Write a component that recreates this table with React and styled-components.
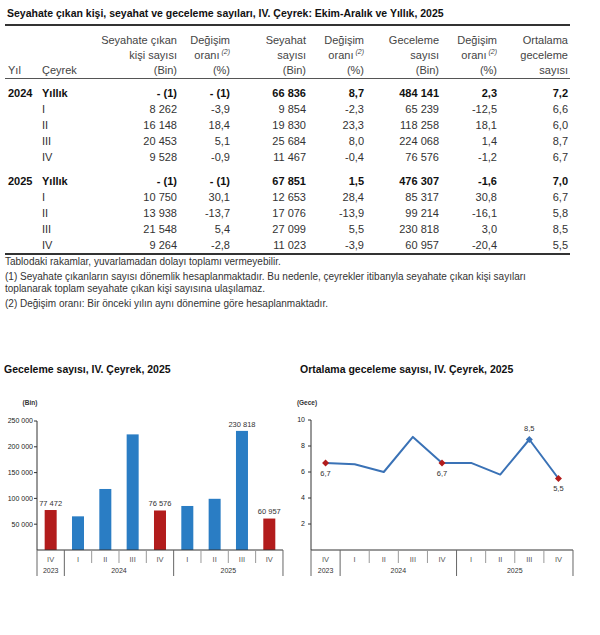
import React from 'react';
import styled, { createGlobalStyle } from 'styled-components';

const GlobalStyle = createGlobalStyle`
  body {
    margin: 0;
    background: #fff;
    font-family: "Liberation Sans", Arial, sans-serif;
  }
`;

const Page = styled.div`
  width: 600px;
  height: 635px;
  padding: 6px 0 0 5px;
  box-sizing: border-box;
  color: #222;
  overflow: hidden;
`;

const Title = styled.div`
  font-size: 10.5px;
  font-weight: bold;
  line-height: 14px;
  padding-left: 2px;
  color: #111;
`;

const Table = styled.table`
  width: 565px;
  margin-top: 4px;
  border-collapse: collapse;
  table-layout: fixed;
  border-top: 2px solid #333;
  border-bottom: 2px solid #333;
  font-size: 11px;
`;

const HeadCell = styled.th`
  font-weight: normal;
  color: #444;
  line-height: 15px;
  vertical-align: bottom;
  text-align: ${p => (p.left ? 'left' : 'right')};
  padding: 7px ${p => (p.left ? '0' : '2px')} 0 ${p => p.pl || 0}px;
  border-bottom: 1px solid #555;
`;

const Sup = styled.sup`
  font-size: 7px;
  font-style: italic;
  line-height: 0;
  vertical-align: baseline;
  position: relative;
  top: -5px;
  margin-left: 2px;
`;

const Cell = styled.td`
  height: 16px;
  line-height: 16px;
  padding: ${p => p.gap || 0}px ${p => (p.left ? '0' : '2px')} 0 ${p => p.pl || 0}px;
  text-align: ${p => (p.left ? 'left' : 'right')};
  font-weight: ${p => (p.bold ? 'bold' : 'normal')};
  color: ${p => (p.bold ? '#111' : '#333')};
  white-space: nowrap;
`;

const Notes = styled.div`
  margin-top: 1px;
  font-size: 10px;
  line-height: 12.5px;
  color: #333;
`;

const Note = styled.p`
  margin: ${p => (p.first ? '0' : '2px')} 0 0;
`;

const Charts = styled.div`
  display: flex;
  margin: 52px 0 0 -5px;
`;

const ChartBlock = styled.div`
  width: ${p => p.w}px;
  display: flex;
  flex-direction: column;
`;

const ChartTitle = styled.div`
  font-size: 10.5px;
  font-weight: bold;
  line-height: 14px;
  color: #111;
  padding-left: ${p => p.pl}px;
`;

const ChartSvg = styled.svg`
  display: block;
  margin-top: 15px;
  font-family: "Liberation Sans", Arial, sans-serif;
`;

const widths = [32, 63, 79, 53, 76, 58, 75, 58, 71];

const heads = [
  [['Yıl'], true, 3],
  [['Çeyrek'], true, 5],
  [['Seyahate çıkan', 'kişi sayısı', '(Bin)']],
  [['Değişim', 'oranı*', '(%)']],
  [['Seyahat', 'sayısı', '(Bin)']],
  [['Değişim', 'oranı*', '(%)']],
  [['Geceleme', 'sayısı', '(Bin)']],
  [['Değişim', 'oranı*', '(%)']],
  [['Ortalama', 'geceleme', 'sayısı']],
];

const groups = [
  {
    year: '2024',
    gap: 6,
    rows: [
      ['Yıllık', '- (1)', '- (1)', '66 836', '8,7', '484 141', '2,3', '7,2'],
      ['I', '8 262', '-3,9', '9 854', '-2,3', '65 239', '-12,5', '6,6'],
      ['II', '16 148', '18,4', '19 830', '23,3', '118 258', '18,1', '6,0'],
      ['III', '20 453', '5,1', '25 684', '8,0', '224 068', '1,4', '8,7'],
      ['IV', '9 528', '-0,9', '11 467', '-0,4', '76 576', '-1,2', '6,7'],
    ],
  },
  {
    year: '2025',
    gap: 8,
    rows: [
      ['Yıllık', '- (1)', '- (1)', '67 851', '1,5', '476 307', '-1,6', '7,0'],
      ['I', '10 750', '30,1', '12 653', '28,4', '85 317', '30,8', '6,7'],
      ['II', '13 938', '-13,7', '17 076', '-13,9', '99 214', '-16,1', '5,8'],
      ['III', '21 548', '5,4', '27 099', '5,5', '230 818', '3,0', '8,5'],
      ['IV', '9 264', '-2,8', '11 023', '-3,9', '60 957', '-20,4', '5,5'],
    ],
  },
];

const HeadLines = ({ lines }) => {
  const padded = [...Array(3 - lines.length).fill('\u00a0'), ...lines];
  return padded.map((l, i) => (
    <div key={i}>
      {l.endsWith('*') ? (
        <>
          {l.slice(0, -1)}
          <Sup>(2)</Sup>
        </>
      ) : (
        l
      )}
    </div>
  ));
};

const StatsTable = () => (
  <Table>
    <colgroup>
      {widths.map((w, i) => (
        <col key={i} style={{ width: w }} />
      ))}
    </colgroup>
    <thead>
      <tr>
        {heads.map(([lines, left, pl], i) => (
          <HeadCell key={i} left={left} pl={pl}>
            <HeadLines lines={lines} />
          </HeadCell>
        ))}
      </tr>
    </thead>
    <tbody>
      {groups.map(g =>
        g.rows.map((r, ri) => {
          const bold = ri === 0;
          const gap = bold ? g.gap : 0;
          return (
            <tr key={g.year + ri}>
              <Cell left pl={3} bold gap={gap}>
                {bold ? g.year : ''}
              </Cell>
              <Cell left pl={5} bold={bold} gap={gap}>
                {r[0]}
              </Cell>
              {r.slice(1).map((v, ci) => (
                <Cell key={ci} bold={bold} gap={gap}>
                  {v}
                </Cell>
              ))}
            </tr>
          );
        }),
      )}
    </tbody>
  </Table>
);

const RED = '#b21c1c';
const BLUE = '#2a7dc4';
const LINE = '#3a72b6';

const barData = [
  { q: 'IV', v: 77472, hi: true, label: '77 472' },
  { q: 'I', v: 65239 },
  { q: 'II', v: 118258 },
  { q: 'III', v: 224068 },
  { q: 'IV', v: 76576, hi: true, label: '76 576' },
  { q: 'I', v: 85317 },
  { q: 'II', v: 99214 },
  { q: 'III', v: 230818, label: '230 818' },
  { q: 'IV', v: 60957, hi: true, label: '60 957' },
];

const years = [
  { label: '2023', from: 0, to: 1 },
  { label: '2024', from: 1, to: 5 },
  { label: '2025', from: 5, to: 9 },
];

// shared category axis for both charts
const CategoryAxis = ({ x0, cw, base }) => (
  <g>
    <line x1={x0} y1={base} x2={x0 + cw * 9} y2={base} stroke="#333" strokeWidth="1" />
    {Array.from({ length: 10 }, (_, i) => {
      const yearEdge = [0, 1, 5, 9].includes(i);
      return (
        <line
          key={i}
          x1={x0 + i * cw}
          y1={base}
          x2={x0 + i * cw}
          y2={yearEdge ? base + 26 : base + 13}
          stroke={yearEdge ? '#666' : '#999'}
          strokeWidth="1"
        />
      );
    })}
    {barData.map((d, i) => (
      <text key={i} x={x0 + (i + 0.5) * cw} y={base + 9} dy="0.35em" fontSize="7.5" fill="#555" textAnchor="middle">
        {d.q}
      </text>
    ))}
    {years.map(y => (
      <text
        key={y.label}
        x={x0 + ((y.from + y.to) / 2) * cw}
        y={base + 21}
        dy="0.35em"
        fontSize="7"
        fill="#333"
        textAnchor="middle"
      >
        {y.label}
      </text>
    ))}
  </g>
);

const BarChart = () => {
  const x0 = 37;
  const cw = 27.33;
  const base = 159;
  const sy = v => base - (v * 129) / 250000;
  const ticks = [250000, 200000, 150000, 100000, 50000];
  return (
    <ChartSvg width="290" height="200">
      <text x="30" y="12" dy="0.35em" fontSize="6.5" fontWeight="bold" fill="#333" textAnchor="middle">
        (Bin)
      </text>
      <line x1={x0} y1={sy(250000)} x2={x0} y2={base} stroke="#333" strokeWidth="1" />
      {ticks.map(t => (
        <g key={t}>
          <line x1={x0 - 3} y1={sy(t)} x2={x0} y2={sy(t)} stroke="#333" />
          <text x={x0 - 4} y={sy(t)} dy="0.35em" fontSize="7" fill="#222" textAnchor="end">
            {t.toLocaleString('en').replace(',', ' ')}
          </text>
        </g>
      ))}
      {barData.map((d, i) => {
        const cx = x0 + (i + 0.5) * cw;
        const top = sy(d.v);
        return (
          <g key={i}>
            <rect x={cx - 6} y={top} width="12" height={base - top} fill={d.hi ? RED : BLUE} />
            {d.label && (
              <text x={cx} y={top - 7} dy="0.35em" fontSize="7.5" fill="#333" textAnchor="middle">
                {d.label}
              </text>
            )}
          </g>
        );
      })}
      <CategoryAxis x0={x0} cw={cw} base={base} />
    </ChartSvg>
  );
};

const lineVals = [6.7, 6.6, 6.0, 8.7, 6.7, 6.7, 5.8, 8.5, 5.5];
const lineLabels = { 0: ['6,7', 10], 4: ['6,7', 10], 7: ['8,5', -11], 8: ['5,5', 10] };

const Diamond = ({ x, y, color }) => (
  <polygon points={`${x},${y - 3.5} ${x + 3.5},${y} ${x},${y + 3.5} ${x - 3.5},${y}`} fill={color} />
);

const LineChart = () => {
  const x0 = 21;
  const cw = 29.11;
  const base = 159;
  const sy = v => base - v * 13;
  const pts = lineVals.map((v, i) => [x0 + (i + 0.5) * cw, sy(v)]);
  return (
    <ChartSvg width="310" height="200">
      <text x="17" y="12" dy="0.35em" fontSize="6.5" fontWeight="bold" fill="#333" textAnchor="middle">
        (Gece)
      </text>
      <line x1={x0} y1={sy(10)} x2={x0} y2={base} stroke="#333" strokeWidth="1" />
      {[10, 8, 6, 4, 2].map(t => (
        <g key={t}>
          <line x1={x0 - 3} y1={sy(t)} x2={x0} y2={sy(t)} stroke="#333" />
          <text x={x0 - 6} y={sy(t)} dy="0.35em" fontSize="7" fill="#222" textAnchor="end">
            {t}
          </text>
        </g>
      ))}
      <polyline
        points={pts.map(p => p.join(',')).join(' ')}
        fill="none"
        stroke={LINE}
        strokeWidth="2"
        strokeLinejoin="round"
      />
      {pts.map(([x, y], i) =>
        [0, 4, 8].includes(i) ? (
          <Diamond key={i} x={x} y={y} color={RED} />
        ) : i === 7 ? (
          <Diamond key={i} x={x} y={y} color={LINE} />
        ) : null,
      )}
      {Object.entries(lineLabels).map(([i, [txt, off]]) => (
        <text
          key={i}
          x={pts[i][0]}
          y={pts[i][1] + off}
          dy="0.35em"
          fontSize="7.5"
          fill="#333"
          textAnchor="middle"
        >
          {txt}
        </text>
      ))}
      <CategoryAxis x0={x0} cw={cw} base={base} />
    </ChartSvg>
  );
};

const App = () => (
  <Page>
    <GlobalStyle />
    <Title>Seyahate çıkan kişi, seyahat ve geceleme sayıları, IV. Çeyrek: Ekim-Aralık ve Yıllık, 2025</Title>
    <StatsTable />
    <Notes>
      <Note first>Tablodaki rakamlar, yuvarlamadan dolayı toplamı vermeyebilir.</Note>
      <Note>
        (1) Seyahate çıkanların sayısı dönemlik hesaplanmaktadır. Bu nedenle, çeyrekler itibanyla seyahate çıkan kişi sayıları
        <br />
        toplanarak toplam seyahate çıkan kişi sayısına ulaşılamaz.
      </Note>
      <Note>(2) Değişim oranı: Bir önceki yılın aynı dönemine göre hesaplanmaktadır.</Note>
    </Notes>
    <Charts>
      <ChartBlock w={290}>
        <ChartTitle pl={4}>Geceleme sayısı, IV. Çeyrek, 2025</ChartTitle>
        <BarChart />
      </ChartBlock>
      <ChartBlock w={310}>
        <ChartTitle pl={10}>Ortalama geceleme sayısı, IV. Çeyrek, 2025</ChartTitle>
        <LineChart />
      </ChartBlock>
    </Charts>
  </Page>
);

export default App;
